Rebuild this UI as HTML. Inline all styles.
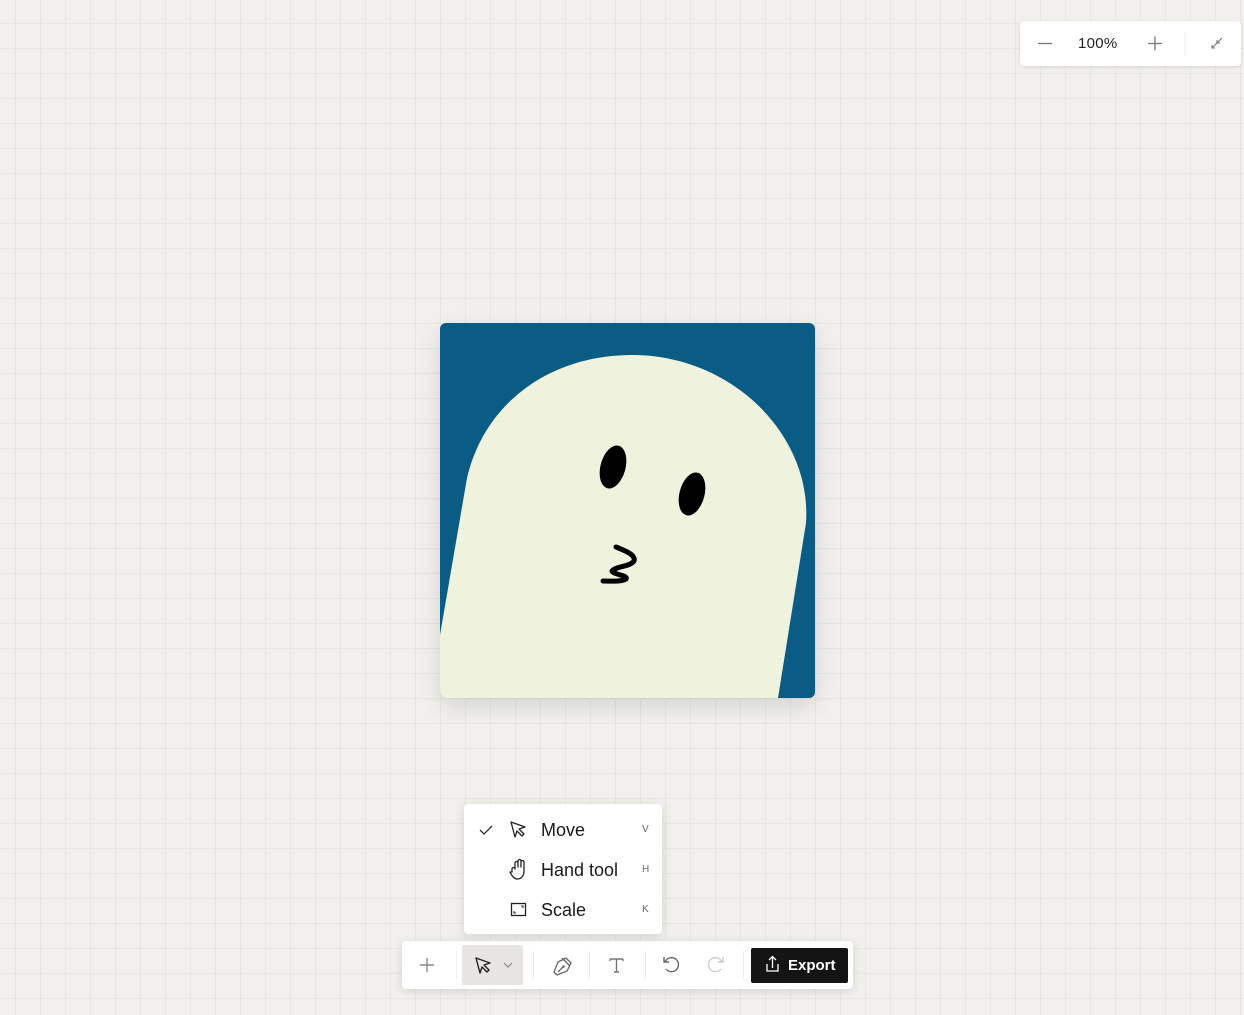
<!DOCTYPE html>
<html><head><style>
html,body{margin:0;padding:0;}
body{width:1244px;height:1015px;position:relative;overflow:hidden;font-family:"Liberation Sans",sans-serif;
background-color:#f1f0ec;
background-image:linear-gradient(to right,#e7e6e1 1px,transparent 1px),linear-gradient(to bottom,#e7e6e1 1px,transparent 1px);
background-size:25px 25px;background-position:15px 23px;}
.zoom{position:absolute;left:1020px;top:21px;width:221px;height:45px;background:#fff;border-radius:4px;box-shadow:0 1px 3px rgba(0,0,0,.12);}
.card{position:absolute;left:440px;top:323px;width:375px;height:375px;border-radius:6px;overflow:hidden;box-shadow:0 8px 24px rgba(0,0,0,.12);}
.menu{position:absolute;left:464px;top:804px;width:198px;height:130px;background:#fff;border-radius:4px;box-shadow:0 2px 10px rgba(0,0,0,.12);}
.item{position:absolute;left:0;width:198px;height:40px;font-size:18px;color:#1a1a1a;}
.item .l{position:absolute;left:77px;top:10px;}
.item .k{position:absolute;left:178px;top:14px;font-size:10px;color:#666;}
.bar{position:absolute;left:402px;top:941px;width:451px;height:48px;background:#fff;border-radius:4px;box-shadow:0 2px 10px rgba(0,0,0,.12);}
.sep{position:absolute;top:10px;width:1px;height:28px;background:#ececec;}
.export{position:absolute;left:349px;top:7px;width:97px;height:35px;background:#141414;border-radius:2px;color:#fff;font-weight:bold;font-size:15px;}
</style></head><body>
<div class="zoom">
<svg width="221" height="45" style="position:absolute;left:0;top:0">
<path d="M18 22.5h14" stroke="#777" stroke-width="1.3"/>
<path d="M128 22.5h14M135 15.5v14" stroke="#777" stroke-width="1.3"/>
<path d="M165 12v22" stroke="#eee"/>
<path d="M192 27l5-5M192 24v3h3M202 17l-5 5M197 19v3h3" stroke="#777" stroke-width="1.1" fill="none"/>
</svg>
<div style="position:absolute;left:58px;top:14px;font-size:15px;color:#222;letter-spacing:.3px">100%</div>
</div>
<div class="card">
<svg width="375" height="375" viewBox="0 0 375 375">
<rect width="375" height="375" fill="#0a5c85"/>
<path d="M0 312 L27 155 C45 78 112 32 192 32 C292 32 372 112 366 200 L338 375 L0 375 Z" fill="#eff3dd"/>
<ellipse cx="173" cy="144" rx="12.5" ry="22" transform="rotate(15 173 144)" fill="#000"/>
<ellipse cx="252" cy="171" rx="12.5" ry="22" transform="rotate(15 252 171)" fill="#000"/>
<path d="M176 224 C186 228 196 232 194 238 C190 244 176 243 172 248 C174 252 188 252 186 256 C182 259 170 258 163 258" stroke="#000" stroke-width="5" fill="none" stroke-linecap="round" stroke-linejoin="round"/>
</svg>
</div>
<div class="menu">
<div class="item" style="top:6px">
<svg width="70" height="40" style="position:absolute;left:0;top:0"><path d="M16 20l4 4 8-8" stroke="#333" stroke-width="1.3" fill="none"/><path d="M47 12l14 5-6 2 5 5-2 2-5-5-2 6z" stroke="#222" stroke-width="1.3" fill="none" stroke-linejoin="round"/></svg>
<span class="l">Move</span><span class="k">V</span></div>
<div class="item" style="top:46px">
<svg width="70" height="40" style="position:absolute;left:0;top:0"><path d="M48 22v-3a1.5 1.5 0 013 0v-6a1.5 1.5 0 013 0v4-6a1.5 1.5 0 013 0v6-5a1.5 1.5 0 013 0v9c0 5-3 8-6.5 8s-5.5-3-7.5-7z" stroke="#222" stroke-width="1.3" fill="none" stroke-linejoin="round"/></svg>
<span class="l">Hand tool</span><span class="k">H</span></div>
<div class="item" style="top:86px">
<svg width="70" height="40" style="position:absolute;left:0;top:0"><rect x="47.5" y="13.5" width="14" height="12" stroke="#222" stroke-width="1.3" fill="none"/><path d="M50 21v2h2M59 18v-2h-2" stroke="#222" fill="none"/></svg>
<span class="l">Scale</span><span class="k">K</span></div>
</div>
<div class="bar">
<svg width="451" height="48" style="position:absolute;left:0;top:0">
<path d="M18 24h14M25 17v14" stroke="#888" stroke-width="1.4"/>
<rect x="60" y="4" width="61" height="40" fill="#e6e5e1" rx="2"/>
<path d="M74 17l14 5-6 2 5 5-2 2-5-5-2 6z" stroke="#222" stroke-width="1.4" fill="none" stroke-linejoin="round"/>
<path d="M102 22l4 4 4-4" stroke="#888" stroke-width="1.2" fill="none"/>
<path d="M152 31l4-10 8-4 5 5-4 8-10 4zM156 31l5-5M160 17l8 8" stroke="#666" stroke-width="1.3" fill="none" stroke-linejoin="round"/>
<circle cx="161.5" cy="25.5" r="1.3" fill="#666"/>
<path d="M208 18h13M214.5 18v13M212 31h5M208 18v2M221 18v2" stroke="#777" stroke-width="1.4" fill="none"/>
<path d="M263 21a7 7 0 1 1 1 7M262 16v5h5" stroke="#666" stroke-width="1.4" fill="none"/>
<path d="M320 21a7 7 0 1 0 -1 7M321 16v5h-5" stroke="#ccc" stroke-width="1.4" fill="none"/>
</svg>
<div class="sep" style="left:54px"></div><div class="sep" style="left:131px"></div><div class="sep" style="left:187px"></div><div class="sep" style="left:243px"></div><div class="sep" style="left:341px"></div>
<div class="export">
<svg width="20" height="35" style="position:absolute;left:12px;top:0"><path d="M4 16v7h11v-7M9.5 20v-11M6 12l3.5-3.5 3.5 3.5" stroke="#fff" stroke-width="1.3" fill="none"/></svg>
<span style="position:absolute;left:37px;top:9px">Export</span></div>
</div>
</body></html>
